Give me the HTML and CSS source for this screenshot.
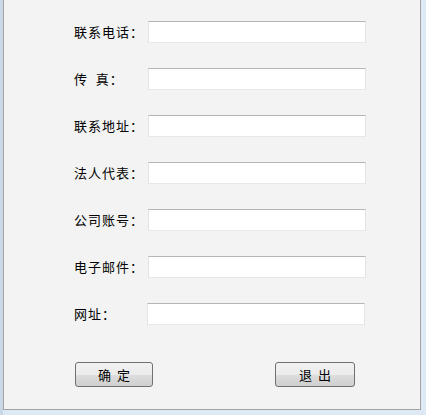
FILE: index.html
```html
<!DOCTYPE html>
<html lang="zh-CN">
<head>
    <meta charset="UTF-8">
    <meta name="viewport" content="width=device-width, initial-scale=1.0">
    <title>联系信息</title>
    <link rel="stylesheet" href="styles.css">
</head>
<body>
    <div class="frame">
        <div class="panel">
            <form class="info-form">
                <div class="row">
                    <label class="label">联系电话：</label>
                    <input class="field" type="text">
                </div>
                <div class="row">
                    <label class="label">传&nbsp;&nbsp;真：</label>
                    <input class="field" type="text">
                </div>
                <div class="row">
                    <label class="label">联系地址：</label>
                    <input class="field" type="text">
                </div>
                <div class="row">
                    <label class="label">法人代表：</label>
                    <input class="field" type="text">
                </div>
                <div class="row">
                    <label class="label">公司账号：</label>
                    <input class="field" type="text">
                </div>
                <div class="row">
                    <label class="label">电子邮件：</label>
                    <input class="field" type="text">
                </div>
                <div class="row">
                    <label class="label short">网址：</label>
                    <input class="field" type="text">
                </div>
                <div class="actions">
                    <button type="button" class="btn">确&nbsp;&nbsp;定</button>
                    <button type="button" class="btn btn-exit">退&nbsp;&nbsp;出</button>
                </div>
            </form>
        </div>
    </div>
</body>
</html>
```

FILE: styles.css
```css
* {
    box-sizing: border-box;
}
body, html {
    margin: 0;
    height: 100%;
    font-family: "Noto Sans CJK SC", "Liberation Sans", sans-serif;
    font-size: 13px;
    color: #000;
    background-color: #dde9f3;
}
.frame {
    height: 415px;
    padding: 0 5px 5px 3px;
    background: linear-gradient(to right, #c9d8e6 0, #c9d8e6 3px, #dde9f5 3px);
}
.panel {
    height: 410px;
    background-color: #f3f3f3;
    border: 1px solid #a3a3a3;
    border-top: none;
}
.info-form {
    display: flex;
    flex-direction: column;
    gap: 25px;
    padding: 21px 0 0 70px;
}
.row {
    display: flex;
    align-items: center;
    height: 22px;
}
.label {
    width: 74px;
    line-height: 22px;
    letter-spacing: 1px;
    white-space: nowrap;
}
.label.short {
    width: 73px;
}
.field {
    width: 218px;
    height: 22px;
    margin: 0;
    padding: 2px 4px;
    background-color: #ffffff;
    border: 1px solid;
    border-color: #b5b5b5 #e3e3e3 #e8e8e8 #e3e3e3;
    outline: none;
    font: inherit;
}
.actions {
    display: flex;
    gap: 122px;
    margin-top: 12px;
    padding-left: 1px;
}
.btn {
    width: 78px;
    height: 25px;
    padding: 0;
    border: 1px solid #707070;
    border-radius: 3px;
    background: linear-gradient(to bottom, #f2f2f2 0%, #ebebeb 50%, #dddddd 51%, #cfcfcf 100%);
    font: inherit;
    color: #000;
    cursor: pointer;
}
.btn-exit {
    width: 80px;
}
.btn:hover {
    background: linear-gradient(to bottom, #eaf6fd 0%, #d9f0fc 50%, #bee6fd 51%, #a7d9f5 100%);
    border-color: #3c7fb1;
}
```
